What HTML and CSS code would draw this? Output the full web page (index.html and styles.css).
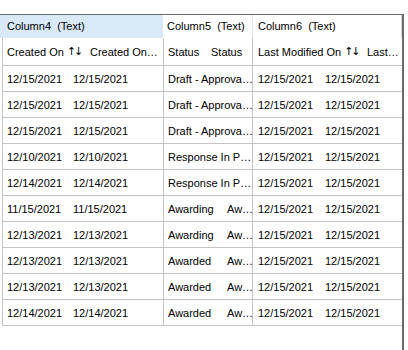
FILE: index.html
```html
<!DOCTYPE html>
<html>
<head>
<meta charset="utf-8">
<link rel="stylesheet" href="styles.css">
</head>
<body>
<div class="grid">
  <div class="group-row">
    <div class="g g1">Column4  (Text)</div>
    <div class="g g2">Column5  (Text)</div>
    <div class="g g3">Column6  (Text)</div>
  </div>
  <div class="head-row">
    <div class="c h1">Created On <span class="arr">↑↓</span></div>
    <div class="c h2">Created On…</div>
    <div class="c h3">Status</div>
    <div class="c h4">Status</div>
    <div class="c h5">Last Modified On <span class="arr">↑↓</span></div>
    <div class="c h6">Last…</div>
  </div>
  <div class="row">
    <div class="c d1">12/15/2021</div><div class="c d2">12/15/2021</div>
    <div class="c d34">Draft - Approva…</div>
    <div class="c d5">12/15/2021</div><div class="c d6">12/15/2021</div>
  </div>
  <div class="row">
    <div class="c d1">12/15/2021</div><div class="c d2">12/15/2021</div>
    <div class="c d34">Draft - Approva…</div>
    <div class="c d5">12/15/2021</div><div class="c d6">12/15/2021</div>
  </div>
  <div class="row">
    <div class="c d1">12/15/2021</div><div class="c d2">12/15/2021</div>
    <div class="c d34">Draft - Approva…</div>
    <div class="c d5">12/15/2021</div><div class="c d6">12/15/2021</div>
  </div>
  <div class="row">
    <div class="c d1">12/10/2021</div><div class="c d2">12/10/2021</div>
    <div class="c d34">Response In P…</div>
    <div class="c d5">12/15/2021</div><div class="c d6">12/15/2021</div>
  </div>
  <div class="row">
    <div class="c d1">12/14/2021</div><div class="c d2">12/14/2021</div>
    <div class="c d34">Response In P…</div>
    <div class="c d5">12/15/2021</div><div class="c d6">12/15/2021</div>
  </div>
  <div class="row">
    <div class="c d1">11/15/2021</div><div class="c d2">11/15/2021</div>
    <div class="c d3">Awarding</div><div class="c d4">Aw…</div>
    <div class="c d5">12/15/2021</div><div class="c d6">12/15/2021</div>
  </div>
  <div class="row">
    <div class="c d1">12/13/2021</div><div class="c d2">12/13/2021</div>
    <div class="c d3">Awarding</div><div class="c d4">Aw…</div>
    <div class="c d5">12/15/2021</div><div class="c d6">12/15/2021</div>
  </div>
  <div class="row">
    <div class="c d1">12/13/2021</div><div class="c d2">12/13/2021</div>
    <div class="c d3">Awarded</div><div class="c d4">Aw…</div>
    <div class="c d5">12/15/2021</div><div class="c d6">12/15/2021</div>
  </div>
  <div class="row">
    <div class="c d1">12/13/2021</div><div class="c d2">12/13/2021</div>
    <div class="c d3">Awarded</div><div class="c d4">Aw…</div>
    <div class="c d5">12/15/2021</div><div class="c d6">12/15/2021</div>
  </div>
  <div class="row">
    <div class="c d1">12/14/2021</div><div class="c d2">12/14/2021</div>
    <div class="c d3">Awarded</div><div class="c d4">Aw…</div>
    <div class="c d5">12/15/2021</div><div class="c d6">12/15/2021</div>
  </div>
</div>
</body>
</html>
```
FILE: styles.css
```css
html, body {
  margin: 0;
  padding: 0;
  background: #fff;
}
body {
  font-family: "Liberation Sans", Arial, sans-serif;
  font-size: 11px;
  color: #000;
}
.grid {
  margin-top: 14px;
  width: 402px;
  height: 336px;
  border-top: 1px solid #6a6a6a;
  border-right: 2px solid #6a6a6a;
  box-sizing: content-box;
}
.group-row {
  display: flex;
  height: 23px;
}
.g {
  box-sizing: border-box;
  padding-left: 7px;
  padding-top: 3px;
  line-height: 17px;
  white-space: pre;
  overflow: hidden;
}
.g1 {
  width: 163px;
  background: #d9e9f8;
}
.g2 {
  width: 90px;
  padding-left: 4px;
  border-right: 1px solid #e2e2e2;
}
.g3 {
  width: 149px;
  padding-left: 5px;
  border-right: 1px solid #d8d8d8;
}
.head-row, .row {
  display: flex;
  margin-left: 2px;
  border-left: 1px solid #c4c4c4;
  border-bottom: 1px solid #c4c4c4;
  width: 400px;
  box-sizing: border-box;
}
.head-row {
  height: 28px;
}
.row {
  height: 26px;
}
.c {
  box-sizing: border-box;
  white-space: nowrap;
  overflow: hidden;
  display: flex;
  align-items: center;
  padding-left: 4px;
}
.arr {
  font-family: "DejaVu Sans", sans-serif;
  font-size: 11px;
  margin-left: 3px;
  letter-spacing: -2px;
}
.h1 { width: 83px; }
.h2 { width: 78px; border-right: 1px solid #c4c4c4; }
.h3 { width: 43px; }
.h4 { width: 46px; border-right: 1px solid #c4c4c4; }
.h5 { width: 110px; padding-left: 5px; }
.h6 { width: 39px; }

.d1 { width: 66px; }
.d2 { width: 95px; border-right: 1px solid #c4c4c4; }
.d34 { width: 89px; border-right: 1px solid #c4c4c4; }
.d3 { width: 60px; }
.d4 { width: 29px; padding-left: 3px; border-right: 1px solid #c4c4c4; }
.d5 { width: 68px; padding-left: 5px; }
.d6 { width: 81px; }
```
